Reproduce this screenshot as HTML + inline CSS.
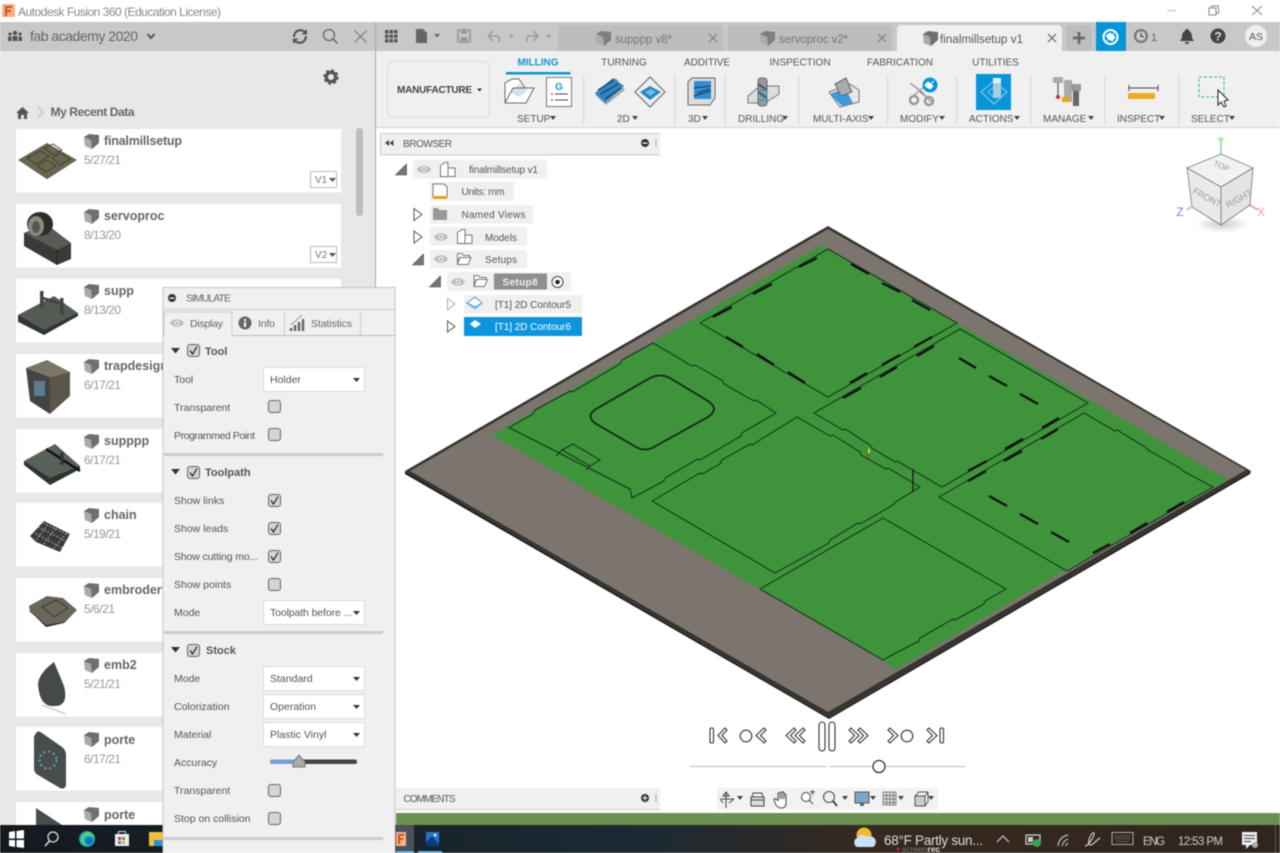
<!DOCTYPE html>
<html><head><meta charset="utf-8"><title>Autodesk Fusion 360</title>
<style>
html,body{margin:0;padding:0;width:1280px;height:853px;overflow:hidden;background:#fff}
svg{display:block;filter:blur(.4px)}
text{font-family:"Liberation Sans",sans-serif}
.n{font-size:12.5px;font-weight:bold;fill:#666}
.d{font-size:12px;fill:#999}
.t{font-size:10px;fill:#555}
.l{font-size:10.5px;fill:#666}
.s{font-size:10.5px;fill:#555}
.h{font-size:11px;font-weight:bold;fill:#555}
.tree{font-size:10px;fill:#555}
</style></head><body>
<svg width="1280" height="853" viewBox="0 0 1280 853" xmlns="http://www.w3.org/2000/svg">
<defs>
<g id="cube"><path d="M0 3 5 0 15 1 15 9 8 15 1 12Z" fill="#6f6f6f"/><path d="M0 3 7 6 8 15 1 12Z" fill="#aaa"/></g>
<g id="eye"><path d="M-7 0C-4-5 4-5 7 0 4 5-4 5-7 0Z" fill="#bbb"/><circle r="2.6" fill="#eee"/><circle r="1.3" fill="#aaa"/></g>
<g id="cb"><rect x=".5" y=".5" width="12" height="12" rx="2.5" fill="#d4d4d4" stroke="#666"/></g>
<g id="cc"><rect x=".5" y=".5" width="12" height="12" rx="2.5" fill="#d4d4d4" stroke="#666"/><path d="M3 6.500 5.500 10 10 2.500" fill="none" stroke="#222" stroke-width="1.200"/></g>
<g id="dd"><rect x=".5" y=".5" width="101" height="24" fill="#fff" stroke="#ddd"/><path d="M90 11h7l-3.500 4Z" fill="#333"/></g>
<g id="down"><path d="M0 0 6 0 3 4Z" fill="#444"/></g>
<g id="tri"><path d="M0 11 11 0 11 11Z" fill="#777" stroke="#444" stroke-width=".6"/></g>
<g id="fold"><path d="M.5 1.500h4l2 2h6v2h-10l-2 7ZM.5 12.500l2.500-7h11l-3 7Z" fill="#fff" stroke="#777"/></g>
<g id="body"><path d="M.5 3.500 5 .5h3v14H.5ZM8 6h7v8.500H8" fill="#fff" stroke="#777"/></g>
<clipPath id="cards"><rect x="0" y="51" width="375" height="774"/></clipPath>
<linearGradient id="tb" x1="0" x2="1" y1="0" y2="0"><stop offset="0" stop-color="#14191e"/><stop offset=".5" stop-color="#1c2a33"/><stop offset=".68" stop-color="#36291f"/><stop offset="1" stop-color="#30261f"/></linearGradient>
<radialGradient id="sh"><stop offset="0" stop-color="#888" stop-opacity=".45"/><stop offset="1" stop-color="#888" stop-opacity="0"/></radialGradient>
</defs>

<!-- title bar -->
<rect width="1280" height="22" fill="#fff"/>
<rect x="2" y="4" width="13" height="13" rx="1" fill="#f3b184"/><path d="M5 6h7v2H7v2h4v2H7v4H5Z" fill="#c9541e"/>
<text x="18" y="16" font-size="12" fill="#888" textLength="203">Autodesk Fusion 360 (Education License)</text>
<path d="M1167 10.500h9" stroke="#bbb"/><rect x="1211.500" y="6" width="7" height="7" fill="none" stroke="#888"/><rect x="1209" y="8" width="7" height="7" fill="#fff" stroke="#888"/>
<path d="M1252 6 1262 15M1262 6 1252 15" stroke="#888"/>

<!-- data panel -->
<rect y="22" width="375" height="29" fill="#c8c8c8"/>
<rect y="51" width="375" height="774" fill="#e8e8e8"/>
<rect x="375" y="22" width="1" height="803" fill="#a8a8a8"/>
<g fill="#555"><circle cx="15" cy="33" r="2.200"/><circle cx="10" cy="34" r="1.600"/><circle cx="20" cy="34" r="1.600"/><rect x="12.500" y="36" width="5" height="5"/><rect x="8" y="36.500" width="3.500" height="4.500"/><rect x="18.500" y="36.500" width="3.500" height="4.500"/></g>
<text x="30" y="41" font-size="14" fill="#666" textLength="108">fab academy 2020</text>
<path d="M147.500 34 151 38 154.500 34" fill="none" stroke="#555" stroke-width="2"/>
<path d="M294 37a6.500 6.500 0 0 1 11-5l1.500 1.500M306 36a6.500 6.500 0 0 1-11 5l-1.500-1.500" fill="none" stroke="#555" stroke-width="2.200"/><path d="M307 29v5.500h-5.500ZM293 44v-5.500h5.500Z" fill="#555"/>
<circle cx="329" cy="35" r="5.500" fill="none" stroke="#666" stroke-width="1.300"/><path d="M333 39 337.500 43.500" stroke="#666" stroke-width="1.500"/>
<path d="M354.500 30.500 366.500 42.500M366.500 30.500 354.500 42.500" stroke="#777" stroke-width="1.100"/>
<circle cx="331" cy="77" r="4.700" fill="none" stroke="#555" stroke-width="3.400"/><circle cx="331" cy="77" r="6.600" fill="none" stroke="#555" stroke-width="2.200" stroke-dasharray="2.600 2.590"/>
<path d="M16 113 22.500 107 29 113H27V119H24V115H21V119H18V113Z" fill="#555"/>
<path d="M38 107 43 112.500 38 118" fill="none" stroke="#ccc" stroke-width="2"/>
<text x="50.500" y="116" font-size="12" font-weight="bold" fill="#666" textLength="84">My Recent Data</text>
<rect x="356" y="128" width="7" height="88" rx="3" fill="#bdbdbd"/>

<g clip-path="url(#cards)">
<g fill="#fff"><rect x="16" y="129" width="325" height="63.500"/><rect x="16" y="204" width="325" height="63.500"/><rect x="16" y="279" width="325" height="63.500"/><rect x="16" y="354" width="325" height="63.500"/><rect x="16" y="429" width="325" height="63.500"/><rect x="16" y="503" width="325" height="63.500"/><rect x="16" y="578" width="325" height="63.500"/><rect x="16" y="653" width="325" height="63.500"/><rect x="16" y="727" width="325" height="63.500"/><rect x="16" y="802" width="325" height="63.500"/></g>
<use href="#cube" x="84" y="134"/><text x="104" y="145" class="n" textLength="78">finalmillsetup</text><text x="84" y="164" class="d" textLength="37">5/27/21</text>
<use href="#cube" x="84" y="209"/><text x="104" y="220" class="n">servoproc</text><text x="84" y="239" class="d" textLength="37">8/13/20</text>
<use href="#cube" x="84" y="284"/><text x="104" y="295" class="n">supp</text><text x="84" y="314" class="d" textLength="37">8/13/20</text>
<use href="#cube" x="84" y="359"/><text x="104" y="370" class="n">trapdesign</text><text x="84" y="389" class="d" textLength="37">6/17/21</text>
<use href="#cube" x="84" y="434"/><text x="104" y="445" class="n">supppp</text><text x="84" y="464" class="d" textLength="37">6/17/21</text>
<use href="#cube" x="84" y="508"/><text x="104" y="519" class="n">chain</text><text x="84" y="538" class="d" textLength="37">5/19/21</text>
<use href="#cube" x="84" y="583"/><text x="104" y="594" class="n">embrodery</text><text x="84" y="613" class="d" textLength="31">5/6/21</text>
<use href="#cube" x="84" y="658"/><text x="104" y="669" class="n">emb2</text><text x="84" y="688" class="d" textLength="37">5/21/21</text>
<use href="#cube" x="84" y="732"/><text x="104" y="744" class="n">porte</text><text x="84" y="763" class="d" textLength="37">6/17/21</text>
<use href="#cube" x="84" y="807"/><text x="104" y="819" class="n">porte</text>

<rect x="310.500" y="171.500" width="26" height="16" fill="#fff" stroke="#bbb"/><text x="315" y="183" font-size="10" fill="#777">V1</text><path d="M329 178h7l-3.500 4Z" fill="#555"/>
<rect x="310.500" y="246.500" width="26" height="16" fill="#fff" stroke="#bbb"/><text x="315" y="258" font-size="10" fill="#777">V2</text><path d="M329 253h7l-3.500 4Z" fill="#555"/>

<!-- thumbs -->
<path d="M18 160 47 143 77 160 47 178Z" fill="#69654f"/><path d="M18 160 47 178 77 160 47 179Z" fill="#333"/><path d="M27 158 40 151 49 156 36 164ZM44 148 53 144 62 150 53 155ZM37 166 47 160 56 166 46 172ZM52 158 61 153 70 159 60 165Z" fill="none" stroke="#3d3a2c" stroke-width=".8"/>
<path d="M24 233 46 224 71 243 71 259 57 265 24 246Z" fill="#3a3a38"/><path d="M24 233 57 250 71 243 46 224Z" fill="#5a5a56"/><path d="M57 250V265" stroke="#222"/>
<ellipse cx="40" cy="224" rx="13" ry="12" fill="#2d2d2b"/><ellipse cx="36" cy="226" rx="8" ry="10" fill="#8a8a80"/><ellipse cx="36" cy="227" rx="4" ry="6" fill="#555"/>
<path d="M18 315 54 296 78 313 44 335 18 322Z" fill="#555a54"/><path d="M18 315 44 330 78 313 78 316 44 335 18 321Z" fill="#2f3532"/><rect x="40" y="291" width="3.500" height="17" fill="#444"/><rect x="60" y="298" width="3.500" height="17" fill="#444"/><path d="M42 298 62 304" stroke="#444" stroke-width="3"/>
<path d="M26 368 47 360 70 372 50 377Z" fill="#7b7566"/><path d="M26 368 50 377 50 414 30 401Z" fill="#444"/><path d="M50 377 70 372 70 396 50 414Z" fill="#5b5649"/><rect x="34" y="381" width="11" height="15" fill="#5c7d90"/>
<path d="M24 461 55 444 80 466 50 484Z" fill="#58605a"/><path d="M24 461 50 478 80 466 80 469 50 485 24 465Z" fill="#2d3330"/><path d="M46 449 80 471" stroke="#111" stroke-width="2.500"/><path d="M62 452V465" stroke="#333" stroke-width="3"/>
<path d="M30 536 44 521 70 534 60 552 36 542Z" fill="#3b3b38"/><path d="M33 532 62 548M38 527 66 541M43 523 69 535M36 540 48 524M44 544 56 528M54 548 66 534" stroke="#aaa" stroke-width="1.200" stroke-dasharray="1.500 2"/>
<path d="M29 606 47 596 63 598 77 610 64 622 46 625 30 612Z" fill="#6a665a"/><path d="M29 610 46 625 64 622 77 610 64 623 46 627Z" fill="#222"/><path d="M42 607 56 600 68 608 54 617Z" fill="none" stroke="#3a382f"/>
<path d="M54 662 64 686Q69 706 55 706 40 708 38 685Q38 674 54 662Z" fill="#464a47"/><path d="M42 705 66 714" stroke="#bbb"/>
<path d="M36 733Q38 730 42 733L62 747Q66 750 66 755V785Q65 790 60 788L38 775Q34 773 34 768V737Z" fill="#484d4c"/><circle cx="48" cy="760" r="8.500" fill="none" stroke="#58a8d0" stroke-width="2" stroke-dasharray="2 3"/>
<path d="M36 808 62 825H36Z" fill="#484d4c"/>
</g>

<!-- top bar -->
<rect x="376" y="22" width="904" height="29" fill="#c8c8c8"/>
<g fill="#555"><rect x="385" y="30" width="3.500" height="3.500"/><rect x="389.500" y="30" width="3.500" height="3.500"/><rect x="394" y="30" width="3.500" height="3.500"/><rect x="385" y="34.500" width="3.500" height="3.500"/><rect x="389.500" y="34.500" width="3.500" height="3.500"/><rect x="394" y="34.500" width="3.500" height="3.500"/><rect x="385" y="39" width="3.500" height="3.500"/><rect x="389.500" y="39" width="3.500" height="3.500"/><rect x="394" y="39" width="3.500" height="3.500"/></g>
<path d="M416 29h7l4 4v10h-11Z" fill="#666"/><path d="M434 34h6l-3 3.500Z" fill="#666"/>
<rect x="458" y="30" width="12" height="12" rx="1" fill="none" stroke="#999" stroke-width="1.800"/><rect x="461" y="30" width="6" height="4" fill="#999"/><rect x="460.500" y="37" width="7" height="4" fill="#999"/>
<path d="M488 36 493 31M488 36 493 41M488 36H497Q500 37 499 42" fill="none" stroke="#999" stroke-width="1.500"/><path d="M509 35h5l-2.500 3Z" fill="#999"/>
<path d="M538 36 533 31M538 36 533 41M538 36H529Q526 37 527 42" fill="none" stroke="#999" stroke-width="1.500"/><path d="M546 35h5l-2.500 3Z" fill="#999"/>
<path d="M558 51V29a4 4 0 0 1 4-4H719a4 4 0 0 1 4 4V51Z" fill="#bdbdbd"/>
<path d="M728 51V29a4 4 0 0 1 4-4H888a4 4 0 0 1 4 4V51Z" fill="#bdbdbd"/>
<path d="M897 51V29a4 4 0 0 1 4-4H1058a4 4 0 0 1 4 4V51Z" fill="#f0f0f0"/>
<use href="#cube" x="596" y="31" opacity=".8"/><text x="615" y="43" font-size="11.500" fill="#777" textLength="57">supppp v8*</text><path d="M709 34 717 42M717 34 709 42" stroke="#888" stroke-width="1.400"/>
<use href="#cube" x="760" y="31" opacity=".8"/><text x="779" y="43" font-size="11.500" fill="#777" textLength="69">servoproc v2*</text><path d="M878 34 886 42M886 34 878 42" stroke="#888" stroke-width="1.400"/>
<use href="#cube" x="923" y="31"/><text x="940" y="43" font-size="11.500" fill="#555" textLength="83">finalmillsetup v1</text><path d="M1048 34 1056 42M1056 34 1048 42" stroke="#777" stroke-width="1.400"/>
<path d="M1066 51V29a4 4 0 0 1 4-4h18a4 4 0 0 1 4 4v22Z" fill="#bdbdbd"/><path d="M1073 38h12M1079 32v12" stroke="#666" stroke-width="2.600"/>
<rect x="1096" y="22" width="30" height="29" fill="#0696d7"/><circle cx="1110.500" cy="37" r="7" fill="none" stroke="#fff" stroke-width="2"/><path d="M1107 41 1114 33M1106 36l6 5 3-4-5-4Z" fill="#fff" stroke="#fff"/>
<circle cx="1141" cy="36" r="7" fill="#777"/><circle cx="1141" cy="36" r="4.800" fill="#ccc"/><path d="M1141 33v3.500h3" stroke="#333" fill="none"/><text x="1151" y="41" font-size="11" fill="#666">1</text>
<path d="M1187 29a2 2 0 0 1 2 2c3 1 3 5 3 7l2 3h-14l2-3c0-2 0-6 3-7a2 2 0 0 1 2-2ZM1185 42h4a2 2 0 0 1-4 0Z" fill="#444"/>
<circle cx="1218" cy="36" r="7.500" fill="#444"/><text x="1218" y="40.500" text-anchor="middle" font-size="12" font-weight="bold" fill="#ddd">?</text>
<circle cx="1256" cy="36" r="11" fill="#eee"/><text x="1256" y="40" text-anchor="middle" font-size="10.500" fill="#555">AS</text>

<!-- toolbar -->
<rect x="376" y="51" width="904" height="76" fill="#f0f0f0"/><rect x="376" y="127" width="904" height="1" fill="#d4d4d4"/>
<rect x="387.500" y="61.500" width="102" height="56" rx="5" fill="#f0f0f0" stroke="#e0e0e0" stroke-width="1.500"/>
<text x="397" y="93" font-size="10" font-weight="bold" fill="#444" textLength="75">MANUFACTURE</text><path d="M477 88.500h5l-2.500 3Z" fill="#333"/>
<text x="538" y="65.500" text-anchor="middle" font-size="10" font-weight="bold" fill="#1a94d4">MILLING</text><rect x="506" y="72" width="64.500" height="2.500" fill="#0a96d8"/>
<text x="624" y="65.500" text-anchor="middle" class="t">TURNING</text><text x="707" y="65.500" text-anchor="middle" class="t">ADDITIVE</text><text x="800" y="65.500" text-anchor="middle" class="t">INSPECTION</text><text x="900" y="65.500" text-anchor="middle" class="t">FABRICATION</text><text x="995.500" y="65.500" text-anchor="middle" class="t">UTILITIES</text>
<g fill="#ddd"><rect x="583" y="76" width="1.500" height="48"/><rect x="674" y="76" width="1.500" height="48"/><rect x="724.500" y="76" width="1.500" height="48"/><rect x="798" y="76" width="1.500" height="48"/><rect x="887" y="76" width="1.500" height="48"/><rect x="956" y="76" width="1.500" height="48"/><rect x="1030" y="76" width="1.500" height="48"/><rect x="1104" y="76" width="1.500" height="48"/><rect x="1178" y="76" width="1.500" height="48"/></g>
<text x="517" y="122" class="t">SETUP</text><use href="#down" x="550" y="116"/>
<text x="617" y="122" class="t">2D</text><use href="#down" x="632" y="116"/>
<text x="688" y="122" class="t">3D</text><use href="#down" x="702" y="116"/>
<text x="738" y="122" class="t">DRILLING</text><use href="#down" x="782" y="116"/>
<text x="813" y="122" class="t">MULTI-AXIS</text><use href="#down" x="868" y="116"/>
<text x="900" y="122" class="t">MODIFY</text><use href="#down" x="939" y="116"/>
<text x="969" y="122" class="t">ACTIONS</text><use href="#down" x="1014" y="116"/>
<text x="1043" y="122" class="t">MANAGE</text><use href="#down" x="1088" y="116"/>
<text x="1117" y="122" class="t">INSPECT</text><use href="#down" x="1159" y="116"/>
<text x="1191" y="122" class="t">SELECT</text><use href="#down" x="1229" y="116"/>

<!-- ribbon icons -->
<path d="M505 103 505 83 512 79 519 79 525 88 534 88 526 103Z" fill="#fff" stroke="#666"/><path d="M510 92 519 84 528 90 519 97Z" fill="#cfe2ee"/><path d="M505 103 513 88H534" fill="none" stroke="#666"/>
<rect x="546.500" y="77.500" width="25" height="29" fill="#fff" stroke="#777"/><text x="559" y="90" text-anchor="middle" font-size="10" font-weight="bold" fill="#1a94d4">G</text><path d="M551 94h2M555 94h13M551 100h2M555 100h13" stroke="#444"/>
<path d="M595 95 616 78 625 90 606 105Z" fill="#aaa"/><path d="M595 93 613 78 624 86 605 103Z" fill="#2f86c4"/><path d="M598 90 614 80M601 94 618 84M605 99 621 88" stroke="#123a5c" stroke-width="1.100"/>
<path d="M635 92 650 77 665 92 650 107Z" fill="#eee" stroke="#666"/><path d="M640 92 650 86 661 92 650 100Z" fill="#1f88c7"/><path d="M645 92 651 89 656 92 650 96Z" fill="#7ab8dc"/>
<path d="M688 82 692 78H715V98L710 105H688Z" fill="#ddd" stroke="#666"/><rect x="694" y="81" width="17" height="18" fill="#2f8fd0"/><path d="M694 88 711 86M694 96 711 91M697 93 710 89" stroke="#153a58"/>
<path d="M748 96 760 86H779V94L765 103H748Z" fill="#ddd" stroke="#777"/><rect x="758" y="78" width="9" height="28" rx="3" fill="#999" stroke="#666"/><path d="M758 84 767 90M758 92 767 98" stroke="#555" stroke-width="2"/><rect x="758" y="90" width="9" height="10" fill="none" stroke="#1a94d4"/>
<path d="M829 92 850 84 859 90 859 102 840 107Z" fill="#e8e8e8" stroke="#777"/><path d="M830 94 845 88 853 103 842 106Z" fill="#3a9ade"/><path d="M835 84 846 78 852 92 841 96Z" fill="#aaa" stroke="#666"/>
<path d="M910 83 922 92 933 104M911 98 925 86" stroke="#aaa" stroke-width="1.800"/><circle cx="914" cy="100" r="4" fill="none" stroke="#999" stroke-width="2.500"/><circle cx="929" cy="101" r="4" fill="none" stroke="#999" stroke-width="2.500"/><circle cx="930" cy="85" r="7.500" fill="#0696d7"/><path d="M926 88 934 81M925 85l5 4 3-3-5-4Z" fill="#fff" stroke="#fff"/>
<rect x="976" y="74" width="35" height="36" fill="#0696d7"/><path d="M981 92 994 81 1007 92 994 104Z" fill="none" stroke="#7cc5ea" stroke-width="1.200"/><path d="M988 92 994 87 1001 92 994 98Z" fill="none" stroke="#7cc5ea"/><rect x="993" y="78" width="8" height="20" fill="#a7cde4"/><rect x="993" y="78" width="8" height="5" fill="#e4eef4"/>
<rect x="1053" y="77" width="10" height="6" fill="#aaa"/><path d="M1058 83V96" stroke="#777" stroke-width="1.500"/><circle cx="1058" cy="97" r="2" fill="#d22"/><rect x="1064" y="80" width="8" height="22" fill="#aaa"/><path d="M1062 97h8v5h-8Z" fill="#e8a61a"/><rect x="1071" y="84" width="10" height="7" fill="#999"/><rect x="1073" y="91" width="6" height="15" fill="#666"/>
<path d="M1129 88h29M1129 85v6M1158 85v6" stroke="#444"/><rect x="1128" y="93" width="27" height="6" fill="#eeaa22"/>
<rect x="1199" y="77" width="25" height="20" fill="none" stroke="#3fb06a" stroke-dasharray="3 2"/><path d="M1218 90V105L1221 102 1224 107 1226 106 1224 101 1228 100Z" fill="#fff" stroke="#222"/>

<!-- viewport model -->
<path d="M828 226 1251 471 829 717 405 471Z" fill="#37342f"/>
<path d="M828 229 1246 470 828 712 410 471Z" fill="#7b756e"/>
<path d="M405 471 829 717 1251 471 1250 474 829 719 405 474Z" fill="#1f1f1d"/>
<path d="M822 245 1228 480 1064 571 895 670 884 661 492 435Z" fill="#3f933b"/>
<g fill="none" stroke="#10301a" stroke-width="1">
<path d="M700 323 828 249 957 323 828 397Z"/>
<path d="M510 427 533 414 535 410 570 391 572 392 620 364 622 360 653 343 692 366 695 365 723 381 724 384 754 401 756 400 776 413 742 433 741 436 700 460 698 459 665 478 664 481 632 498 630 489 508 427"/>
<path d="M652 501 700 473 702 474 720 464 722 460 750 444 752 445 797 417 830 436 833 435 860 452 861 455 886 469 888 468 920 487 894 503 893 505 860 524 858 523 830 540 829 543 775 573Z"/>
<path d="M814 413 843 430 845 429 870 445 872 448 895 462 897 461 942 487 1088 403 960 329Z"/>
<path d="M939 497 1084 413 1115 431 1117 430 1145 447 1148 450 1180 468 1183 471 1213 487 1067 571Z"/>
<path d="M883 518 1006 589 985 601 984 604 955 620 953 619 920 638 919 641 890 656 883 660 760 589Z"/>
<path d="M562 450 573 444 600 460 590 466ZM556 456 562 450M590 466 586 470"/>
</g>
<path d="M596 409 650 378Q660 373 670 378L708 401Q720 409 708 417L654 447Q645 452 636 447L598 425Q584 417 596 409Z" fill="none" stroke="#0f2a14" stroke-width="1.800"/>
<g stroke="#111" stroke-width="2.300" fill="none">
<path d="M713 317 732 307M753 294 772 284M799 267 817 258M851 264 869 274M882 283 900 292M912 300 930 310M726 337 743 347M757 354 774 365M788 372 805 383M850 383 867 373M882 365 900 355M914 347 932 337"/>
<path d="M843 398 861 388M880 377 897 367M917 356 934 346M959 358 976 368M989 376 1007 386M1020 394 1038 404M968 471 987 461M1005 449 1023 439M1042 428 1059 418"/>
<path d="M968 481 986 471M1004 461 1022 451M1041 439 1058 429M989 496 1007 506M1020 514 1038 524M1051 532 1069 542"/>
<path d="M1093 553 1110 544M1130 533 1147 523M1167 512 1184 502"/>
</g>
<path d="M913 469V492" stroke="#222" stroke-width="1.500"/><path d="M869 449V453" stroke="#ee3" stroke-width="1.500"/><path d="M868 454V458" stroke="#a42" stroke-width="1.500"/>

<!-- view cube -->
<ellipse cx="1222" cy="224" rx="26" ry="9" fill="url(#sh)"/>
<path d="M1221 137V155" stroke="#9fe0a8" stroke-width="2"/><path d="M1187 210 1191 207M1250 205 1258 210" stroke="#eaa" stroke-width="2"/>
<text x="1221" y="146" text-anchor="middle" font-size="12" fill="#a6e2ae">Y</text><text x="1261" y="216" text-anchor="middle" font-size="12" fill="#f29a9a">X</text><text x="1180" y="216" text-anchor="middle" font-size="12" fill="#7a7ae8">Z</text>
<path d="M1187 168 1221 154 1253 168 1221 187Z" fill="#f2f2f2" stroke="#777" stroke-width=".8"/>
<path d="M1187 168 1221 187V225L1192 207Z" fill="#eaeaea" stroke="#777" stroke-width=".8"/>
<path d="M1253 168 1221 187V225L1250 205Z" fill="#e4e4e4" stroke="#777" stroke-width=".8"/>
<text font-size="8" fill="#999" transform="translate(1213 165) rotate(25)">TOP</text>
<text font-size="9" fill="#999" transform="translate(1192 193) rotate(28)">FRONT</text>
<text font-size="9" fill="#999" transform="translate(1228 208) rotate(-28)">RIGHT</text>

<!-- browser -->
<rect x="380.500" y="133.500" width="280" height="21.500" fill="#f0f0f0" stroke="#ccc"/><rect x="660" y="133" width="2" height="23" fill="#fff"/>
<path d="M385 143 389 140V146ZM389.500 143 393.500 140V146Z" fill="#444"/>
<text x="403" y="147" class="t" fill="#666" textLength="49">BROWSER</text>
<circle cx="645" cy="143" r="4" fill="#333"/><rect x="642.500" y="142.500" width="5" height="1.200" fill="#fff"/><path d="M656 139v8" stroke="#aaa"/>

<g fill="#f0f0f0"><rect x="413" y="160" width="134" height="18.500"/><rect x="430" y="182" width="84" height="19"/><rect x="430" y="205" width="103" height="18.500"/><rect x="430" y="227" width="97" height="18.500"/><rect x="430" y="250" width="97" height="18.500"/><rect x="447" y="272" width="124" height="19"/><rect x="464" y="295" width="118" height="18.500"/></g>
<rect x="464" y="317" width="118" height="19" fill="#0b95dc"/>
<use href="#tri" x="395.500" y="164"/><use href="#eye" x="424" y="169.500"/><use href="#body" x="440" y="162"/><text x="469" y="173" class="tree" textLength="69">finalmillsetup v1</text>
<path d="M433 184h11l3 3v10h-14Z" fill="#fff" stroke="#777"/><rect x="433" y="196" width="14" height="3" fill="#e8a61a"/><text x="461.500" y="195" class="tree" textLength="43">Units: mm</text>
<path d="M414 208.500 422 214.500 414 220.500Z" fill="#fff" stroke="#555"/><path d="M433 208h5l1 2h8v10h-14Z" fill="#999"/><text x="461.500" y="218" class="tree" textLength="64">Named Views</text>
<path d="M414 231 422 237 414 243Z" fill="#fff" stroke="#555"/><use href="#eye" x="441" y="237"/><use href="#body" x="457" y="229"/><text x="485" y="241" class="tree" textLength="32">Models</text>
<use href="#tri" x="412.500" y="254"/><use href="#eye" x="441" y="259"/><use href="#fold" x="457" y="252"/><text x="485" y="263" class="tree" textLength="32">Setups</text>
<use href="#tri" x="429.500" y="276"/><use href="#eye" x="458" y="282"/><use href="#fold" x="473.500" y="274"/><rect x="494" y="273.500" width="53" height="16" fill="#8f8f8f"/><text x="502.500" y="285.500" font-size="10" font-weight="bold" fill="#eee" textLength="35">Setup8</text><circle cx="557.500" cy="282" r="5.500" fill="#fff" stroke="#444"/><circle cx="557.500" cy="282" r="2.300" fill="#222"/>
<path d="M447.500 298.500 455 304 447.500 310Z" fill="#fff" stroke="#aaa"/><path d="M467 304 475 297 482 304 475 310Z" fill="#8ec4e8"/><path d="M467 303 475 297 482 303 475 307Z" fill="#fff" stroke="#4ba0d8"/><text x="495" y="308" font-size="10" fill="#555" textLength="76">[T1] 2D Contour5</text>
<path d="M447.500 321 455 326.500 447.500 332Z" fill="#fff" stroke="#555"/><path d="M470 324 475 320 481 324 475 328Z" fill="#fff"/><text x="495" y="330" font-size="10" fill="#fff" textLength="76">[T1] 2D Contour6</text>

<!-- playback -->
<g fill="#fff" stroke="#333" stroke-width="1.100">
<rect x="710" y="728" width="3.500" height="15" rx="1.500"/><path d="M725 728 718 735.500 725 743 727 741 722 735.500 727 730Z"/>
<circle cx="746" cy="736" r="5.800"/><path d="M764 728 756 735.500 764 743 766 741 760.500 735.500 766 730Z"/>
<path d="M794 728 786 735.500 794 743 796 741 790.500 735.500 796 730Z"/><path d="M803 728 795 735.500 803 743 805 741 799.500 735.500 805 730Z"/>
<rect x="819" y="722" width="6" height="29" rx="3"/><rect x="829" y="722" width="6" height="29" rx="3"/>
<path d="M851 728 859 735.500 851 743 849 741 854.500 735.500 849 730Z"/><path d="M860 728 868 735.500 860 743 858 741 863.500 735.500 858 730Z"/>
<path d="M890 728 898 735.500 890 743 888 741 893.500 735.500 888 730Z"/><circle cx="907" cy="736" r="5.800"/>
<path d="M929 728 937 735.500 929 743 927 741 932.500 735.500 927 730Z"/><rect x="940" y="728" width="3.500" height="15" rx="1.500"/>
</g>
<path d="M690 766.500H826M829 766.500H965" stroke="#bbb"/><circle cx="879" cy="766.500" r="6" fill="#fff" stroke="#333" stroke-width="1.300"/>

<!-- comments/nav -->
<rect x="396" y="788" width="264" height="21" fill="#f0f0f0"/><rect x="396" y="809" width="264" height="1" fill="#ccc"/>
<text x="403.500" y="802" class="t" fill="#777" textLength="52">COMMENTS</text><circle cx="645" cy="798" r="4" fill="#333"/><path d="M642.500 798h5M645 795.500v5" stroke="#fff"/><path d="M656 794v8" stroke="#aaa"/>
<rect x="717" y="788" width="221" height="22" fill="#f2f2f2"/>
<g fill="none" stroke="#444"><path d="M726 792V808M721 799H734M726 792 723 796H729ZM720 799 723 803M729 803 734 799"/><rect x="751" y="797" width="13" height="9" fill="#ddd"/><path d="M751 800h13M753 793h9l1 4h-11Z"/>
<path d="M778 801V794a1 1 0 0 1 2 0V799M780 793a1 1 0 0 1 2 0V799M782 793a1 1 0 0 1 2 0V799M784 795a1 1 0 0 1 2 0V803Q786 808 781 808 777 808 775 803L774 799Q776 798 778 801" fill="#fff"/>
<circle cx="806" cy="797" r="4.500" fill="#fff"/><path d="M809 800 813 804M810 792h5M812.500 790v5"/>
<circle cx="829" cy="797" r="5.500" fill="#e8f2f8"/><path d="M833 801 837 806" stroke-width="2"/></g>
<rect x="855" y="792" width="14" height="11" fill="#7aa8cc" stroke="#555"/><rect x="860" y="803" width="4" height="3" fill="#666"/>
<rect x="883" y="792" width="13" height="13" fill="#ddd" stroke="#666" stroke-width=".7"/><path d="M883 795.500h13M883 799h13M883 802.500h13M886.500 792v13M890 792v13M893.500 792v13" stroke="#666" stroke-width=".7"/>
<rect x="915" y="796" width="10" height="10" fill="#ccc" stroke="#555"/><path d="M915 796 919 792H928V802L925 806M925 796 928 792" fill="none" stroke="#555"/>
<use href="#down" x="737" y="796"/><use href="#down" x="842" y="796"/><use href="#down" x="870" y="796"/><use href="#down" x="898" y="796"/><use href="#down" x="928" y="796"/>

<!-- bottom stripe & taskbar -->
<rect x="396" y="813" width="884" height="12" fill="#6a914f"/>
<rect y="825" width="1280" height="28" fill="url(#tb)"/>
<path d="M9 832 15 831V838.500H9ZM16.500 831 24 830V838.500H16.500ZM9 840H15V847L9 846ZM16.500 840H24V848L16.500 847Z" fill="#fff"/>
<circle cx="53" cy="837" r="5" fill="none" stroke="#ddd" stroke-width="1.300"/><path d="M49.500 841 45 846" stroke="#ddd" stroke-width="1.500"/>
<circle cx="87" cy="839" r="8" fill="#1aa3c9"/><path d="M81 842Q80 833 88 832 94 833 95 838 89 834 84 838 83 843 88 845 83 846 81 842Z" fill="#4fd27a"/><circle cx="89" cy="841" r="3.500" fill="#0c6fb8"/>
<rect x="115" y="834" width="14" height="12" fill="#eee"/><path d="M118.500 834v-2.500h7V834" fill="none" stroke="#ddd"/><rect x="118" y="837" width="3" height="3" fill="#d33"/><rect x="122" y="837" width="3" height="3" fill="#4a4"/><rect x="118" y="841" width="3" height="3" fill="#28c"/><rect x="122" y="841" width="3" height="3" fill="#ea3"/>
<rect x="149" y="832" width="14" height="14" fill="#f0c040"/><rect x="154" y="840" width="9" height="6" fill="#2b8fd8"/>
<rect x="396" y="825" width="18" height="28" fill="#4c5358"/><rect x="396" y="832" width="10" height="14" fill="#f3b184"/><path d="M398 834h6v2h-4v2h3v2h-3v4h-2Z" fill="#c9541e"/>
<rect x="396" y="851" width="18" height="2" fill="#5fb0e0"/><rect x="418" y="851" width="24" height="2" fill="#5fb0e0"/>
<rect x="426" y="832" width="13" height="14" fill="#2774c8"/><path d="M426 842 432 836 439 844V846H426Z" fill="#0d3a80"/><circle cx="435" cy="835" r="1.500" fill="#cde"/>
<circle cx="864" cy="835" r="7.500" fill="#f5b72d"/><path d="M857 847a5 5 0 0 1 0-9 6 6 0 0 1 10-1 5 5 0 0 1 6 10Z" fill="#c9e2f5"/>
<text x="884" y="845" font-size="13.500" fill="#ddd" textLength="99">68°F  Partly sun...</text>
<circle cx="898" cy="849" r="1.300" fill="#e22"/><text x="902" y="852" font-size="8.500" fill="#777">screen<tspan fill="#ddd" font-weight="bold">rec</tspan></text>
<path d="M997 842 1003 836 1009 842" fill="none" stroke="#ccc" stroke-width="1.200"/>
<rect x="1026" y="835" width="14" height="9" fill="none" stroke="#ccc" stroke-width="1.300"/><rect x="1028" y="837" width="5" height="5" fill="#ccc"/><circle cx="1037" cy="843" r="4" fill="#2fa44a"/>
<path d="M1058 846Q1059 837 1068 835M1062 846Q1063 841 1068 839M1066 846Q1066 844 1068 843" fill="none" stroke="#bbb" stroke-width="1.200"/>
<path d="M1085 846C1088 846 1095 836 1094 833 1092 831 1086 843 1090 845 1094 845 1097 839 1100 838" fill="none" stroke="#ccc" stroke-width="1.200"/>
<rect x="1112" y="832.500" width="21" height="12" fill="none" stroke="#aaa"/><path d="M1115 836h15M1115 838.500h15M1117 841.500h11" stroke="#999" stroke-dasharray="1 1"/>
<text x="1143" y="845" font-size="11.500" fill="#ccc" textLength="22">ENG</text><text x="1178" y="845" font-size="11.500" fill="#ccc" textLength="45">12:53 PM</text>
<path d="M1242 832H1257V845H1250L1246 849V845H1242Z" fill="#eee"/><path d="M1244 835.500h11M1244 838.500h11M1244 841.500h7" stroke="#444"/><circle cx="1255" cy="845" r="3" fill="#aaa"/>
<rect x="1275" y="825" width="1" height="28" fill="#555"/>

<!-- simulate -->
<rect x="163" y="287" width="232" height="566" fill="#f0f0f0"/><path d="M163 853V287.500H395V853" fill="none" stroke="#c4c4c4"/>
<path d="M163 309.500H395" stroke="#ccc"/>
<circle cx="172" cy="298" r="4" fill="#333"/><rect x="169.500" y="297.500" width="5" height="1.200" fill="#fff"/><text x="186" y="301.500" class="l" textLength="45">SIMULATE</text>
<path d="M163 335.500H395" stroke="#bbb"/><path d="M164 336V312H232V336" fill="#f0f0f0" stroke="#ccc"/><rect x="164" y="334" width="68" height="3" fill="#f0f0f0"/><path d="M284.500 312V335M360.500 312V335" stroke="#ccc"/>
<use href="#eye" x="177" y="323"/><text x="190" y="327" class="l" textLength="33">Display</text>
<circle cx="245" cy="323" r="6.500" fill="#666"/><rect x="244" y="322" width="2" height="5" fill="#fff"/><rect x="244" y="319" width="2" height="2" fill="#fff"/><text x="258" y="327" class="l" textLength="17">Info</text>
<path d="M291 331v-3M295 331v-6M299 331v-9M303 331v-12" stroke="#666" stroke-width="2.500"/><path d="M291 325 302 315" stroke="#999"/><text x="311" y="327" class="l" textLength="41">Statistics</text>

<g fill="#333"><path d="M171 348h9l-4.500 5.500Z"/><path d="M171 469h9l-4.500 5.500Z"/><path d="M171 647h9l-4.500 5.500Z"/></g>
<use href="#cc" x="187" y="344"/><text x="205" y="355" class="h">Tool</text>
<use href="#cc" x="187" y="466"/><text x="205" y="476" class="h">Toolpath</text>
<use href="#cc" x="187" y="644"/><text x="206" y="654" class="h">Stock</text>
<text x="174" y="383" class="s">Tool</text><use href="#dd" x="263" y="367"/><text x="270" y="383" class="s">Holder</text>
<text x="174" y="411" class="s">Transparent</text><use href="#cb" x="268" y="400"/>
<text x="174" y="439" class="s" textLength="81">Programmed Point</text><use href="#cb" x="268" y="428"/>
<rect x="164" y="453" width="219" height="3" fill="#ccc"/>
<text x="174" y="504" class="s">Show links</text><use href="#cc" x="268" y="494"/>
<text x="174" y="532" class="s">Show leads</text><use href="#cc" x="268" y="522"/>
<text x="174" y="560" class="s" textLength="84">Show cutting mo...</text><use href="#cc" x="268" y="550"/>
<text x="174" y="588" class="s">Show points</text><use href="#cb" x="268" y="578"/>
<text x="174" y="616" class="s">Mode</text><use href="#dd" x="263" y="600"/><text x="270" y="616" class="s" textLength="82">Toolpath before ...</text>
<rect x="164" y="631" width="219" height="3" fill="#ccc"/>
<text x="174" y="682" class="s">Mode</text><use href="#dd" x="263" y="666"/><text x="270" y="682" class="s">Standard</text>
<text x="174" y="710" class="s">Colorization</text><use href="#dd" x="263" y="694"/><text x="270" y="710" class="s">Operation</text>
<text x="174" y="738" class="s">Material</text><use href="#dd" x="263" y="722"/><text x="270" y="738" class="s">Plastic Vinyl</text>
<text x="174" y="766" class="s">Accuracy</text><rect x="270" y="759.500" width="87" height="4.500" rx="2" fill="#444"/><rect x="270" y="759.500" width="29" height="4.500" rx="2" fill="#7b9fd8"/><path d="M299 755 305 762V767H293V762Z" fill="#aaa" stroke="#777"/>
<text x="174" y="794" class="s">Transparent</text><use href="#cb" x="268" y="784"/>
<text x="174" y="822" class="s">Stop on collision</text><use href="#cb" x="268" y="812"/>
<rect x="164" y="837" width="219" height="3" fill="#ccc"/>
<text x="205" y="861" class="h">Misc</text>
</svg>
</body></html>
